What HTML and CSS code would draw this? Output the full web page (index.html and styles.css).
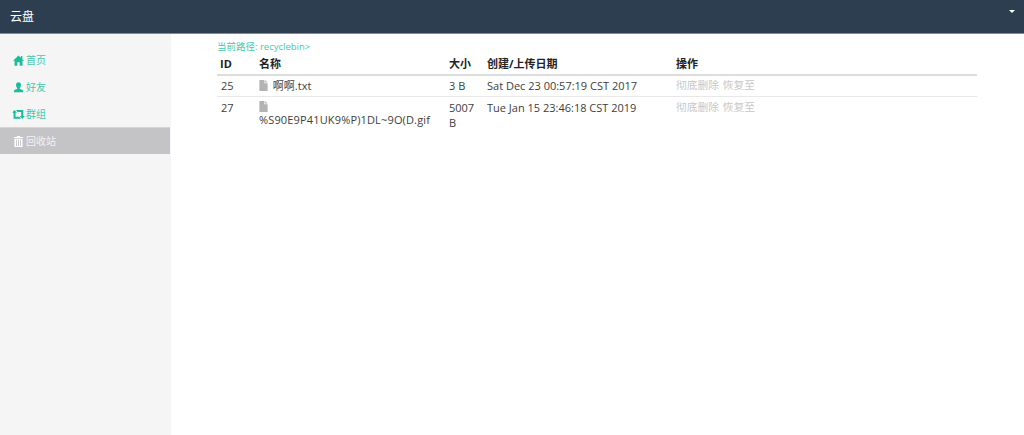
FILE: index.html
```html
<!DOCTYPE html>
<html lang="zh">
<head>
<meta charset="utf-8">
<title>云盘</title>
<link rel="stylesheet" href="styles.css">
</head>
<body>
<header class="navbar">
  <span class="brand">云盘</span>
  <span class="caret"></span>
</header>
<div class="layout">
  <nav class="sidebar">
    <a class="nav-item"><svg class="nav-icon" viewBox="0 0 12 12"><path d="M6 .6 0 6.200h1.700V11.600h3V8h2.600v3.600h3V6.200H12L10.200 4.500V1.200H8.600v1.800z"/></svg>首页</a>
    <a class="nav-item"><svg class="nav-icon" viewBox="0 0 12 12"><path d="M6 .3c1.700 0 2.700 1.200 2.700 3 0 1.500-.6 2.700-1.300 3.300v1.100c1.500.5 3.600 1 3.600 2.100v1.400H1v-1.400c0-1.100 2.100-1.600 3.600-2.100V6.600C3.900 6 3.300 4.800 3.300 3.300c0-1.800 1-3 2.700-3z"/></svg>好友</a>
    <a class="nav-item"><svg class="nav-icon wide" viewBox="0 0 14 10"><path d="M2.500 0 5.300 3H3.700V7.600H8L9.800 9.800H1.500V3H0zM4.200 0H12.300V6.800H14L11.200 10 8.400 6.800H10V2.200H6z"/></svg>群组</a>
    <a class="nav-item active"><svg class="nav-icon" viewBox="0 0 12 12"><path d="M4.500 0h3l.5 1h3v1.200H1V1h3zM1.600 3h8.800v9H1.600zM3.200 4.200v6.600h1V4.200zM5.500 4.200v6.600h1V4.200zM7.800 4.200v6.600h1V4.200z" fill-rule="evenodd"/></svg>回收站</a>
  </nav>
  <main class="content">
    <p class="path">当前路径: recyclebin&gt;</p>
    <table class="files">
      <thead>
        <tr>
          <th class="col-id">ID</th>
          <th class="col-name">名称</th>
          <th class="col-size">大小</th>
          <th class="col-date">创建/上传日期</th>
          <th>操作</th>
        </tr>
      </thead>
      <tbody>
        <tr>
          <td class="id">25</td>
          <td><svg class="file-icon" viewBox="0 0 9 12"><path d="M0 0h5.500v3.500H9V12H0zM6.300 0 9 2.700H6.300z"/></svg> 啊啊.txt</td>
          <td>3 B</td>
          <td>Sat Dec 23 00:57:19 CST 2017</td>
          <td class="ops">彻底删除 恢复至</td>
        </tr>
        <tr>
          <td class="id">27</td>
          <td><svg class="file-icon stacked" viewBox="0 0 9 12"><path d="M0 0h5.500v3.500H9V12H0zM6.300 0 9 2.700H6.300z"/></svg><span class="long-name">%S90E9P41UK9%P)1DL~9O(D.gif</span></td>
          <td>5007 B</td>
          <td>Tue Jan 15 23:46:18 CST 2019</td>
          <td class="ops">彻底删除 恢复至</td>
        </tr>
      </tbody>
    </table>
  </main>
</div>
</body>
</html>
```
FILE: styles.css
```css
* { box-sizing: border-box; }
html, body { height: 100%; }
body {
  margin: 0;
  display: flex;
  flex-direction: column;
  overflow: hidden;
  background: #fff;
  color: #404040;
  font-family: "Open Sans", "Noto Sans CJK SC", sans-serif;
  font-size: 11px;
  line-height: 1.42857;
}
.navbar {
  height: 34px;
  flex: none;
  display: flex;
  justify-content: space-between;
  padding: 0 9px 0 10px;
  background: #2c3e50;
  border-bottom: 1px solid #7f8a96;
}
.brand {
  color: #fff;
  font-size: 12px;
  line-height: 34px;
}
.caret {
  width: 0;
  height: 0;
  margin-top: 10px;
  border-top: 3px solid #fff;
  border-left: 3px solid transparent;
  border-right: 3px solid transparent;
}
.layout { flex: 1; display: flex; min-height: 0; }
.sidebar {
  width: 171px;
  flex: none;
  padding: 12px 1px 0 0;
  background: #f5f5f5;
}
.nav-item {
  display: flex;
  align-items: center;
  gap: 2px;
  height: 27px;
  padding: 2px 0 0 13px;
  color: #45c9ab;
  font-size: 10px;
  line-height: 25px;
}
.nav-icon { width: 11px; height: 11px; fill: #1abc9c; flex: none; }
.nav-icon.wide { width: 13px; height: 9px; margin-left: -1px; margin-right: -1px; }
.active {
  background: #c4c4c6;
  box-shadow: inset 0 1px 0 #d6d6d8;
  color: #f2f2f2;
}
.active .nav-icon { fill: #fff; }
.content { flex: 1; min-width: 0; padding: 5px 47px 0 46px; }
.path {
  margin: 0;
  height: 15px;
  color: #45c9ab;
  font-size: 9.500px;
  line-height: 15px;
}
.files { width: 760px; border-collapse: collapse; table-layout: fixed; }
.files th {
  padding: 2px 3px 2px;
  border-bottom: 2px solid #ddd;
  color: #222;
  font-size: 11px;
  font-weight: 700;
  text-align: left;
  line-height: 16px;
}
.files td {
  padding: 2px 3px 3px;
  border-bottom: 1px solid #e8e8e8;
  vertical-align: top;
  line-height: 15px;
}
.files tr:last-child td { padding-top: 3px; border-bottom: 0; }
.files td.id { padding-left: 4px; }
.col-id { width: 39px; }
.col-name { width: 190px; }
.col-size { width: 38px; }
.col-date { width: 189px; }
.file-icon { width: 9px; height: 11px; fill: #b3b3b3; vertical-align: -1px; margin-right: 2px; }
.file-icon.stacked { display: block; margin: 1px 0 0; }
.long-name { display: block; white-space: nowrap; letter-spacing: .15px; }
.ops { color: #c8c8c8; font-size: 10.750px; word-spacing: 1px; }
```
